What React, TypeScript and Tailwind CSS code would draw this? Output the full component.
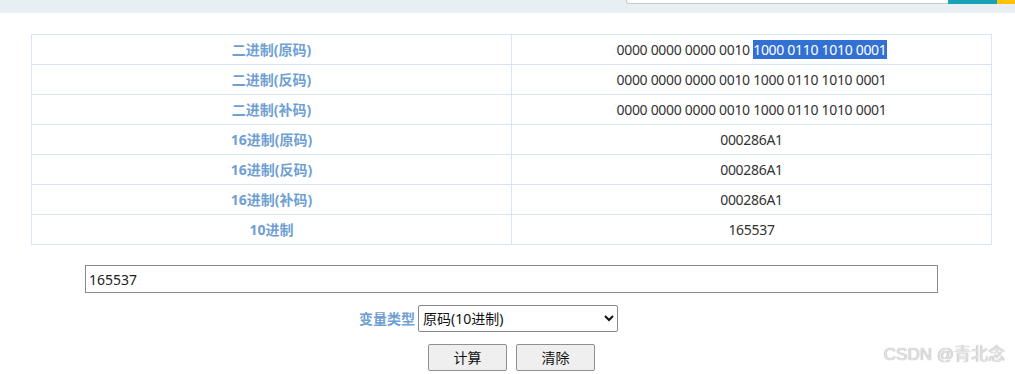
import React, { useState } from "react";

const rows = [
  { k: "二进制(原码)", v: "0000 0000 0000 0010 1000 0110 1010 0001", sel: true },
  { k: "二进制(反码)", v: "0000 0000 0000 0010 1000 0110 1010 0001" },
  { k: "二进制(补码)", v: "0000 0000 0000 0010 1000 0110 1010 0001" },
  { k: "16进制(原码)", v: "000286A1" },
  { k: "16进制(反码)", v: "000286A1" },
  { k: "16进制(补码)", v: "000286A1" },
  { k: "10进制", v: "165537" },
];

export default function App() {
  const [valor, setValor] = useState("165537");

  return (
    <div
      className="relative w-[1015px] h-[374px] bg-white overflow-hidden text-[14px] text-[#333]"
      style={{ fontFamily: '"Segoe UI", "Noto Sans", "Noto Sans CJK SC", sans-serif' }}
    >
      {/* barra de topo */}
      <div className="h-[13px] bg-[#e8eff2] flex justify-end items-start">
        <div className="w-[322px] h-[4px] bg-white border-b border-l border-[#c5ccd2] rounded-bl-[3px]" />
        <div className="w-[49px] h-[4px] bg-[#17a2b8]" />
        <div className="w-[18px] h-[4px] bg-[#ffc107]" />
      </div>

      {/* tabela */}
      <div className="pl-[31px] pt-[21px]">
        <table className="w-[961px] border-collapse">
          <tbody>
            {rows.map((r) => (
              <tr key={r.k} className="h-[30px]">
                <td className="w-[480px] border border-[#d6e6f6] text-center font-bold text-[#6f9fd3]">
                  {r.k}
                </td>
                <td className="border border-[#d6e6f6] text-center tracking-[-0.3px]">
                  {r.sel ? (
                    <>
                      0000 0000 0000 0010{" "}
                      <span className="bg-[#3370d4] text-white">1000 0110 1010 0001</span>
                    </>
                  ) : (
                    r.v
                  )}
                </td>
              </tr>
            ))}
          </tbody>
        </table>
      </div>

      {/* entrada */}
      <div className="pl-[85px] pt-[20px]">
        <input
          value={valor}
          onChange={(e) => setValor(e.target.value)}
          className="w-[853px] h-[28px] px-[3px] border border-[#8a8a8a] outline-none text-[14px] text-[#222]"
        />
      </div>

      {/* tipo de variável */}
      <div className="flex items-center pl-[359px] pt-[12px]">
        <span className="font-bold text-[#6f9fd3] mr-[3px]">变量类型</span>
        <select className="w-[200px] h-[27px] border border-[#888] rounded-[2px] bg-white text-[14px] text-[#111] pl-0">
          <option>原码(10进制)</option>
          <option>原码(16进制)</option>
          <option>原码(2进制)</option>
        </select>
      </div>

      {/* botões */}
      <div className="flex gap-[9px] pl-[428px] pt-[12px]">
        <button className="w-[79px] h-[27px] bg-[#efefef] border border-[#8f8f8f] rounded-[2px] text-[14px] text-[#111]">
          计算
        </button>
        <button className="w-[79px] h-[27px] bg-[#efefef] border border-[#8f8f8f] rounded-[2px] text-[14px] text-[#111]">
          清除
        </button>
      </div>

      {/* marca d'água */}
      <div
        className="absolute right-[10px] bottom-[7px] text-[17px] font-normal text-[#e4e4e4]"
        style={{ textShadow: "0 0 1px #8a8a8a", fontFamily: '"Liberation Sans", "Noto Sans CJK SC", sans-serif' }}
      >
        CSDN @青北念
      </div>
    </div>
  );
}
